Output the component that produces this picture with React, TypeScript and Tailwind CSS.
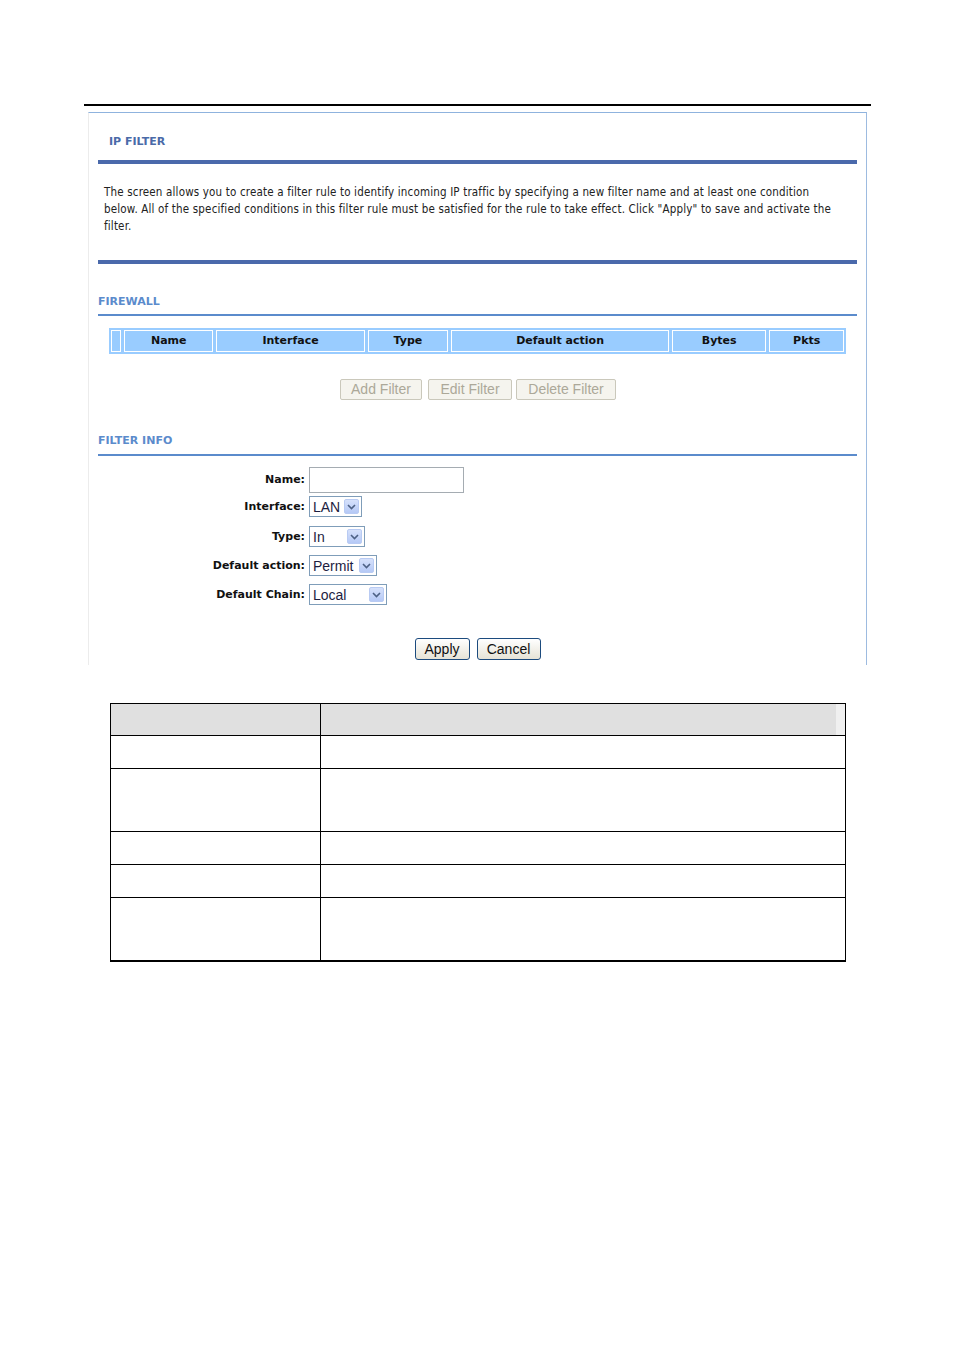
import React from 'react';

const FONT = { fontFamily: '"DejaVu Sans", Verdana, sans-serif' };
const BODY = { fontFamily: '"DejaVu Sans Condensed", "DejaVu Sans", Tahoma, sans-serif' };
const ARIAL = { fontFamily: '"Liberation Sans", Arial, sans-serif' };

const columns = [
  { label: '', w: 'w-[10px]' },
  { label: 'Name', w: 'w-[90px]' },
  { label: 'Interface', w: 'w-[149px]' },
  { label: 'Type', w: 'w-[81px]' },
  { label: 'Default action', w: 'w-[219px]' },
  { label: 'Bytes', w: 'w-[95px]' },
  { label: 'Pkts', w: 'w-[75px]' },
];

function Chevron() {
  return (
    <svg width="9" height="6" viewBox="0 0 9 6">
      <path d="M1 1 L4.5 4.5 L8 1" fill="none" stroke="#4d6185" strokeWidth="1.6" />
    </svg>
  );
}

function FakeSelect({ value, width }: { value: string; width: string }) {
  return (
    <div className={`${width} h-[21px] border border-[#7f9db9] bg-white flex items-center justify-between pl-[3px] pr-[2px]`}>
      <span className="text-[14px] leading-none text-[#1d1d3f]" style={ARIAL}>{value}</span>
      <span className="w-[15px] h-[15px] rounded-[2px] border border-[#b9cbf3] bg-gradient-to-b from-[#d6e1fb] to-[#b5c9f6] flex items-center justify-center">
        <Chevron />
      </span>
    </div>
  );
}

function GreyButton({ children, width }: { children: React.ReactNode; width: string }) {
  return (
    <div
      className={`${width} h-[21px] border border-[#cac8bb] rounded-[2px] bg-[#f5f4ee] text-[#aca899] text-[14px] flex items-center justify-center`}
      style={ARIAL}
    >
      {children}
    </div>
  );
}

function XpButton({ children, width }: { children: React.ReactNode; width: string }) {
  return (
    <div
      className={`${width} h-[22px] border border-[#1c4b7e] rounded-[3px] bg-gradient-to-b from-white to-[#e6e3d6] text-[#111] text-[14px] flex items-center justify-center`}
      style={ARIAL}
    >
      {children}
    </div>
  );
}

function FormRow({ label, children, mt }: { label: string; children: React.ReactNode; mt: string }) {
  return (
    <div className={`flex items-center ${mt}`}>
      <div className="w-[220px] text-right text-[11px] font-bold text-[#111] pr-[4px] pt-[1px]" style={FONT}>
        {label}
      </div>
      {children}
    </div>
  );
}

export default function App() {
  const descRows = ['h-[31px]', 'h-[33px]', 'h-[63px]', 'h-[33px]', 'h-[33px]', 'h-[63px]'];
  return (
    <div className="w-[954px] h-[1351px] bg-white overflow-hidden">
      <div className="ml-[84px] mt-[104px] w-[787px] h-[2px] bg-black" />

      <div className="ml-[88px] mt-[6px] w-[779px] h-[553px] border-t border-t-[#8fb3de] border-l border-l-[#ececec] border-r border-r-[#9dbbe0]">
        <div className="pl-[20px] pt-[22px] text-[11px] leading-[14px] font-bold text-[#4a6aa8]" style={FONT}>
          IP FILTER
        </div>
        <div className="ml-[9px] mt-[11px] w-[759px] h-[4px] bg-[#4a69ab]" />

        <p className="ml-[15px] w-[750px] mt-[20px] text-[11.5px] leading-[17px] tracking-[0.17px] text-[#222] whitespace-nowrap" style={BODY}>
          The screen allows you to create a filter rule to identify incoming IP traffic by specifying a new filter name and at least one condition
          <br />
          below. All of the specified conditions in this filter rule must be satisfied for the rule to take effect. Click "Apply" to save and activate the
          <br />
          filter.
        </p>
        <div className="ml-[9px] mt-[25px] w-[759px] h-[4px] bg-[#4a69ab]" />

        <div className="pl-[9px] mt-[31px] text-[11px] leading-[14px] font-bold text-[#5b8bcc]" style={FONT}>
          FIREWALL
        </div>
        <div className="ml-[9px] mt-[5px] w-[759px] h-[2px] bg-[#5b8bcc]" />

        <div className="ml-[20px] mt-[12px] w-[737px] h-[26px] bg-[#99ccff] p-[2px] flex gap-[3px]">
          {columns.map((c, i) => (
            <div
              key={i}
              className={`${c.w} h-[22px] border border-white flex items-center justify-center text-[11px] font-bold text-[#111] pt-[1px]`}
              style={FONT}
            >
              {c.label}
            </div>
          ))}
        </div>

        <div className="mt-[25px] flex justify-center pl-[1px]">
          <GreyButton width="w-[82px]">Add Filter</GreyButton>
          <div className="w-[6px]" />
          <GreyButton width="w-[84px]">Edit Filter</GreyButton>
          <div className="w-[4px]" />
          <GreyButton width="w-[100px]">Delete Filter</GreyButton>
        </div>

        <div className="pl-[9px] mt-[34px] text-[11px] leading-[14px] font-bold text-[#5b8bcc]" style={FONT}>
          FILTER INFO
        </div>
        <div className="ml-[9px] mt-[6px] w-[759px] h-[2px] bg-[#5b8bcc]" />

        <FormRow label="Name:" mt="mt-[11px]">
          <div className="w-[155px] h-[26px] border border-[#a5acb2] bg-white" />
        </FormRow>
        <FormRow label="Interface:" mt="mt-[3px]">
          <FakeSelect value="LAN" width="w-[53px]" />
        </FormRow>
        <FormRow label="Type:" mt="mt-[9px]">
          <FakeSelect value="In" width="w-[56px]" />
        </FormRow>
        <FormRow label="Default action:" mt="mt-[8px]">
          <FakeSelect value="Permit" width="w-[68px]" />
        </FormRow>
        <FormRow label="Default Chain:" mt="mt-[8px]">
          <FakeSelect value="Local" width="w-[78px]" />
        </FormRow>

        <div className="mt-[33px] flex justify-center gap-[7px]">
          <XpButton width="w-[55px]">Apply</XpButton>
          <XpButton width="w-[64px]">Cancel</XpButton>
        </div>
      </div>

      <div className="ml-[110px] mt-[38px] w-[736px] border border-black border-b-2">
        {descRows.map((h, i) => (
          <div key={i} className={`flex ${h} ${i > 0 ? 'border-t border-black' : ''}`}>
            <div className={`w-[210px] border-r border-black ${i === 0 ? 'bg-[#e0e0e0]' : ''}`} />
            <div className={`flex-1 ${i === 0 ? 'bg-[#e0e0e0] border-r-[9px] border-r-[#f0f0f0]' : ''}`} />
          </div>
        ))}
      </div>
    </div>
  );
}
